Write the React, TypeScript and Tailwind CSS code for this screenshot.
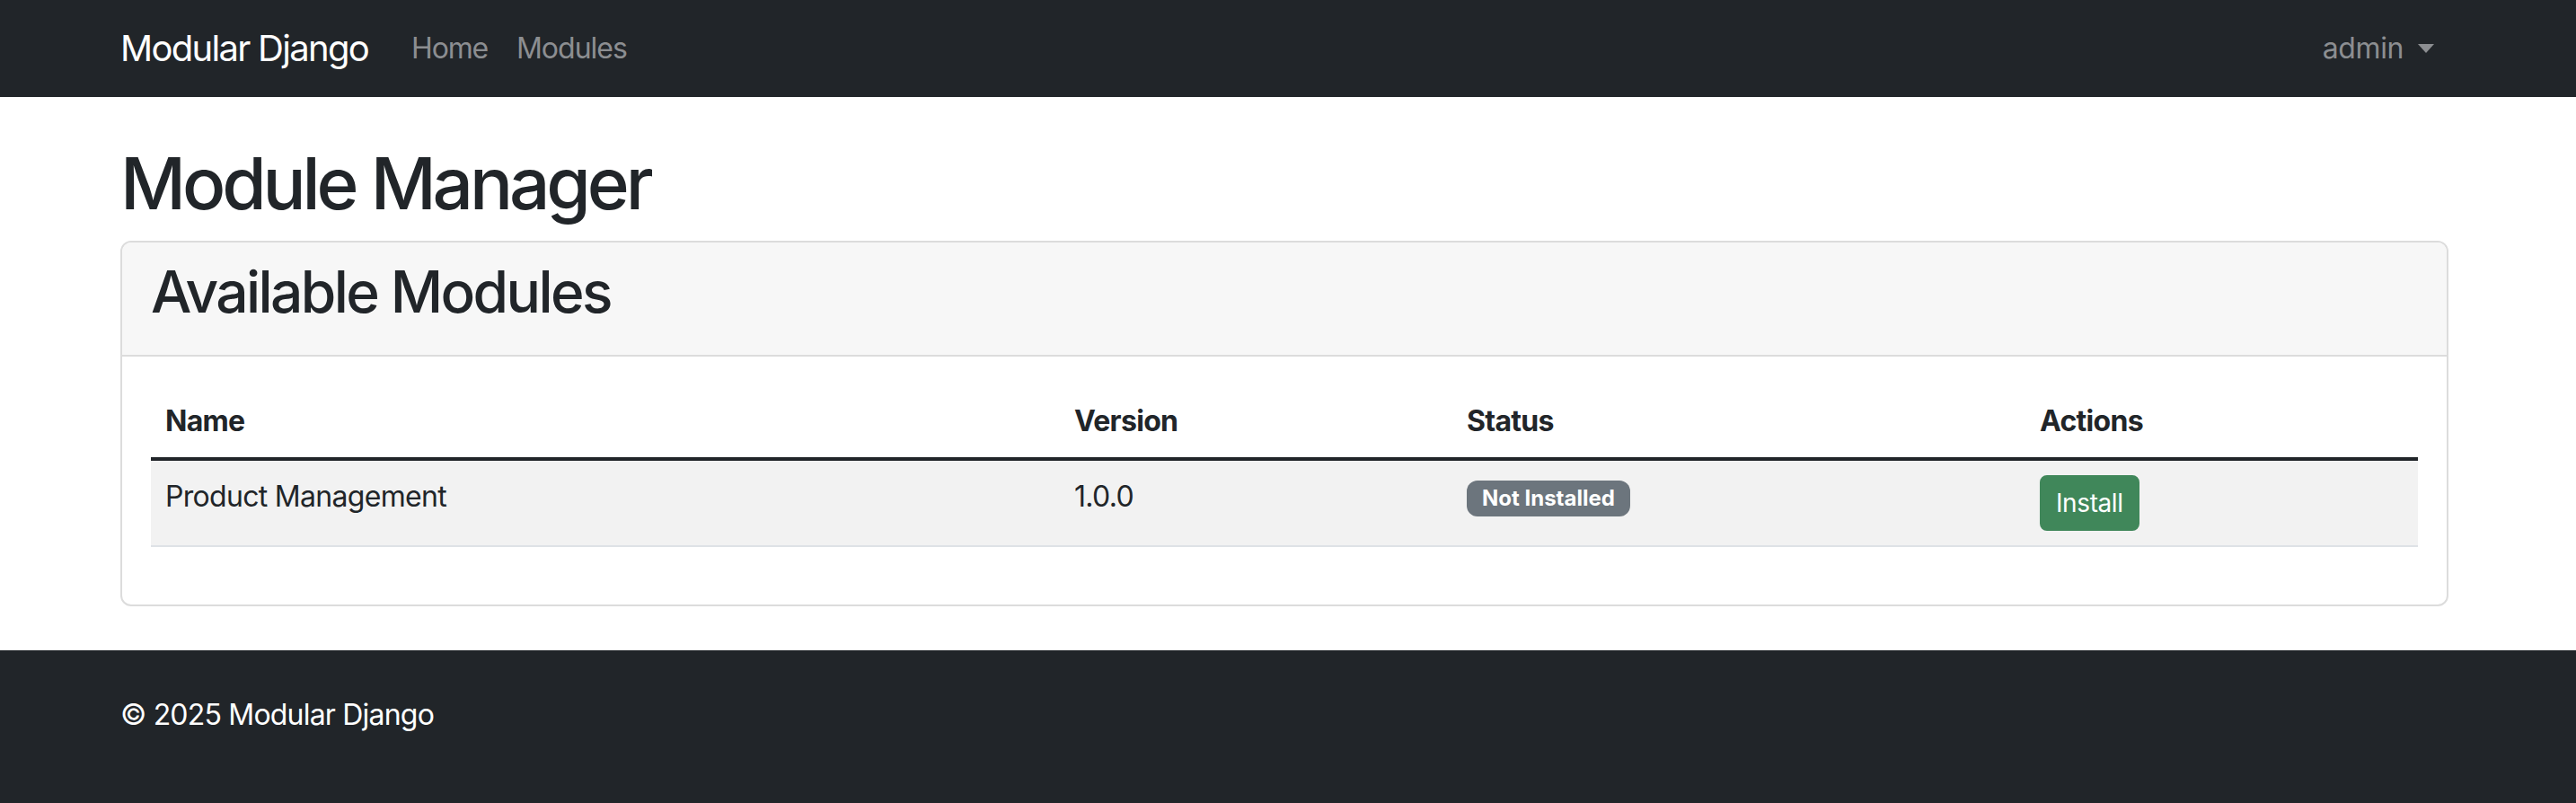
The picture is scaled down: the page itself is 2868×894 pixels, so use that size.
import React from "react";

// simple module manager page, scaled 2x bootstrap-like look
const modules = [
  { name: "Product Management", version: "1.0.0", installed: false },
];

const Navbar = () => (
  <nav className="h-[108px] bg-[#212529] flex items-center">
    <div className="ml-[134px] w-[2592px] flex items-center justify-between">
      <div className="flex items-center">
        <a className="text-[40px] leading-[60px] tracking-[-1.7px] text-white mr-[32px]">Modular Django</a>
        <a className="text-[32px] leading-[48px] tracking-[-1.2px] px-[16px] text-[#8c8e91]">Home</a>
        <a className="text-[32px] leading-[48px] tracking-[-1px] px-[16px] text-[#8c8e91]">Modules</a>
      </div>
      <a className="text-[32px] leading-[48px] tracking-[-0.4px] px-[16px] text-[#8c8e91] flex items-center">
        admin
        <span className="ml-[16px] w-0 h-0 border-l-[9px] border-r-[9px] border-t-[10px] border-l-transparent border-r-transparent border-t-[#8c8e91]" />
      </a>
    </div>
  </nav>
);

const App = () => {
  return (
    <div className="font-[Inter,'Liberation_Sans',sans-serif] text-[#212529] bg-white min-h-screen">
      <Navbar />

      <main className="ml-[134px] w-[2592px] pt-[48px] pb-[49px]">
        <h1 className="text-[80px] leading-[96px] font-medium tracking-[-4.1px] mb-[16px]">Module Manager</h1>

        {/* card */}
        <div className="border-2 border-[#dcdcdc] rounded-[12px] overflow-hidden">
          <div className="bg-[#f7f7f7] border-b-2 border-[#dcdcdc] px-[32px] pt-[16px] pb-[16px]">
            <h2 className="text-[64px] leading-[77px] font-medium tracking-[-2.6px] mb-[16px]">Available Modules</h2>
          </div>

          <div className="p-[32px]">
            <table className="w-full border-collapse mb-[32px] text-[32px] leading-[48px] tracking-[-0.7px]">
              <thead>
                <tr className="border-b-4 border-[#212529]">
                  <th className="w-[1012px] text-left font-bold p-[16px] align-top">Name</th>
                  <th className="w-[437px] text-left font-bold p-[16px] align-top">Version</th>
                  <th className="w-[638px] text-left font-bold p-[16px] align-top">Status</th>
                  <th className="w-[437px] text-left font-bold p-[16px] align-top">Actions</th>
                </tr>
              </thead>
              <tbody>
                {modules.map((m) => (
                  <tr key={m.name} className="bg-[#f2f2f2] border-b-2 border-[#dee2e6]">
                    <td className="p-[16px] align-top">{m.name}</td>
                    <td className="p-[16px] align-top">{m.version}</td>
                    <td className="p-[16px] align-top">
                      {!m.installed && (
                        <span className="inline-block bg-[#6c757d] text-white text-[24px] leading-[24px] tracking-[0px] font-bold px-[17px] py-[8px] rounded-[12px] align-[1px]">
                          Not Installed
                        </span>
                      )}
                    </td>
                    <td className="p-[16px] align-top">
                      <button className="bg-[#40875a] border-2 border-[#40875a] text-white text-[28px] leading-[42px] tracking-[-0.4px] px-[16px] py-[8px] rounded-[8px] block">
                        Install
                      </button>
                    </td>
                  </tr>
                ))}
              </tbody>
            </table>
          </div>
        </div>
      </main>

      <footer className="bg-[#212529] h-[171px] pt-[48px]">
        <div className="ml-[134px] w-[2592px] text-white text-[32px] leading-[48px] tracking-[-0.8px]">© 2025 Modular Django</div>
      </footer>
    </div>
  );
};

export default App;
